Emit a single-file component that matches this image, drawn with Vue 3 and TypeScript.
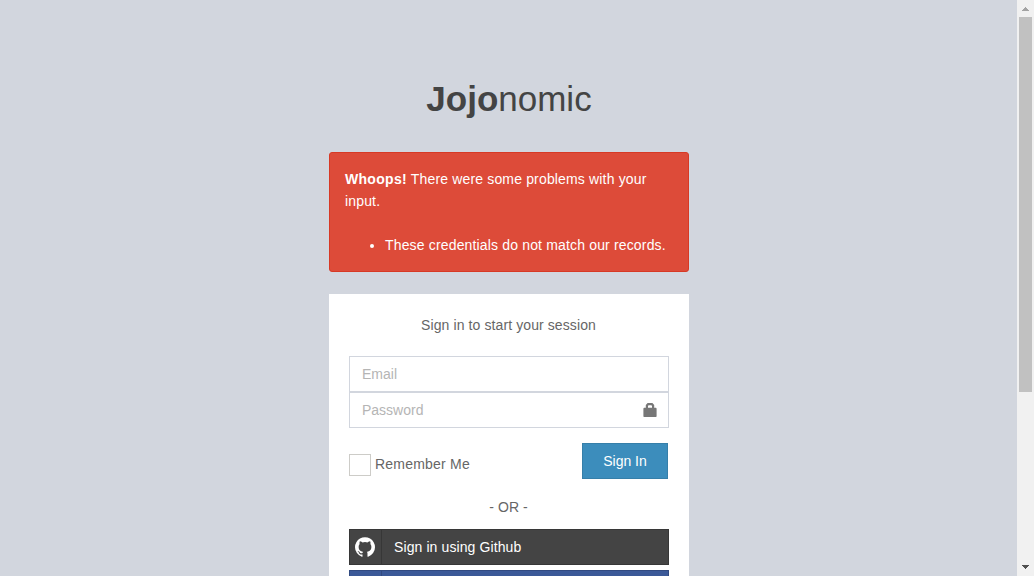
<script setup lang="ts">
import { ref } from 'vue'

const email = ref<string>('')
const password = ref<string>('')
const errors: string[] = ['These credentials do not match our records.']
</script>

<template>
  <div class="window">
    <main class="page">
      <div class="login-box">
        <h1 class="logo"><b>Jojo</b>nomic</h1>
        <div class="alert">
          <strong>Whoops!</strong> <span>There were some problems with your</span><br />
          <span>input.</span>
          <ul>
            <li v-for="error in errors" :key="error">{{ error }}</li>
          </ul>
        </div>
        <form class="panel" @submit.prevent>
          <p class="intro">Sign in to start your session</p>
          <div class="field">
            <input v-model="email" type="text" placeholder="Email" />
          </div>
          <div class="field">
            <input v-model="password" type="password" placeholder="Password" />
            <svg class="lock" viewBox="0 0 14 14">
              <path d="M1 4.8H2.8V2L4.6 0H9.4L11.2 2V4.8H13L13.6 5.4V13.4L13 14H1L.4 13.4V5.4ZM5 4.8H9V3L8.4 2.2H5.6L5 3Z" fill="#777" fill-rule="evenodd" />
            </svg>
          </div>
          <div class="actions">
            <label class="remember"><span class="box"></span><span class="remember-text">Remember Me</span></label>
            <button class="submit" type="submit">Sign In</button>
          </div>
          <p class="or">- OR -</p>
          <a class="social github">
            <span class="social-icon">
              <svg viewBox="0 128 1536 1500">
                <path fill="#fff" d="M768 128q209 0 385.5 103t279.5 279.5 103 385.5q0 251-146.5 451.5t-378.5 277.5q-27 5-40-7t-13-30q0-3 .5-76.5t.5-134.5q0-97-52-142 57-6 102.5-18t94-39 81-66.5 53-105 20.5-150.5q0-119-79-206 37-91-8-204-28-9-81 11t-92 44l-38 24q-93-26-192-26t-192 26q-16-11-42.5-27t-83.5-38.5-85-13.5q-45 113-8 204-79 87-79 206 0 85 20.5 150t52.5 105 80.5 67 94 39 102.5 18q-39 36-49 103-21 10-45 15t-57 5-65.5-21.5-55.5-62.5q-19-32-48.5-52t-49.5-24l-20-3q-21 0-29 4.5t-5 11.5 9 14 13 12l7 5q22 10 43.5 38t31.5 51l10 23q13 38 44 61.5t67 30 69.5 7 55.5-3.5l23-4q0 38 .5 88.5t.5 54.5q0 18-13 30t-40 7q-232-77-378.5-277.5t-146.5-451.5q0-209 103-385.5t279.5-279.5 385.5-103z" />
              </svg>
            </span>
            <span class="social-text">Sign in using Github</span>
          </a>
          <a class="social facebook"><span class="social-icon"></span></a>
        </form>
      </div>
    </main>
    <aside class="scrollbar">
      <svg class="arrow" viewBox="0 0 17 17" shape-rendering="crispEdges">
        <path d="M8 7h1v1h1v1h1v1h1v1H5v-1h1V9h1V8h1z" fill="#a3a3a3" />
      </svg>
      <div class="thumb"></div>
      <svg class="arrow bottom" viewBox="0 0 17 17" shape-rendering="crispEdges">
        <path d="M5 6h7v1h-1v1h-1v1H9v1H8V9H7V8H6V7H5z" fill="#505050" />
      </svg>
    </aside>
  </div>
</template>

<style>
html,
body {
  overflow: hidden;
  background: #d2d6de;
}
</style>

<style scoped>
* {
  box-sizing: border-box;
}
.window {
  display: flex;
  width: 100%;
  height: 576px;
  overflow: hidden;
  background: #d2d6de;
  color: #666;
  font: 14px/22px 'Liberation Sans', Arial, sans-serif;
}
.page {
  flex: 1;
  height: 576px;
  overflow: hidden;
}
.login-box {
  width: 360px;
  margin: 74px 0 0 329px;
}
.logo {
  margin: 0 0 28px;
  height: 50px;
  color: #444;
  font-size: 35px;
  font-weight: 400;
  line-height: 50px;
  text-align: center;
}
.alert {
  height: 120px;
  margin-bottom: 22px;
  padding: 15px;
  border: 1px solid #d73925;
  border-radius: 3px;
  background: #dd4b39;
  color: #fff;
  letter-spacing: 0.16px;
}
.alert strong {
  letter-spacing: 0.3px;
}
.alert ul {
  margin: 22px 0 0;
  padding-left: 40px;
}
.panel {
  height: 400px;
  padding: 20px;
  background: #fff;
}
.intro {
  margin: 0 1px 20px 0;
  letter-spacing: 0.1px;
  text-align: center;
}
.field {
  position: relative;
  height: 36px;
}
.field input {
  display: block;
  width: 100%;
  height: 36px;
  padding: 0 12px;
  border: 1px solid #d2d6de;
  border-radius: 0;
  outline: none;
  background: #fff;
  color: #555;
  font: inherit;
}
.field input::placeholder {
  color: #b5b5b5;
  opacity: 1;
}
.lock {
  position: absolute;
  top: 11px;
  right: 12px;
  width: 14px;
  height: 14px;
}
.actions {
  display: flex;
  justify-content: space-between;
  margin: 15px 1px 17px 0;
}
.remember {
  display: flex;
  gap: 4px;
  height: 22px;
  margin-top: 11px;
}
.remember-text {
  margin-top: -1px;
  letter-spacing: 0.22px;
}
.box {
  width: 22px;
  height: 22px;
  border: 1px solid #cdccc8;
}
.submit {
  width: 86px;
  height: 36px;
  padding: 0;
  border: 1px solid #367fa9;
  background: #3c8dbc;
  color: #fff;
  font: inherit;
}
.or {
  margin: 0 1px 11px 0;
  letter-spacing: 0.1px;
  text-align: center;
}
.social {
  display: flex;
  height: 36px;
  margin-bottom: 5px;
  border: 1px solid #373737;
  color: #fff;
}
.github {
  background: #444;
}
.facebook {
  border-color: #314a81;
  background: #3b5998;
}
.social-icon {
  display: flex;
  align-items: center;
  width: 32px;
  padding-left: 5px;
  border-right: 1px solid #373737;
}
.facebook .social-icon {
  border-color: #314a81;
}
.social-icon svg {
  width: 20px;
  height: 20px;
}
.social-text {
  padding-left: 12px;
  letter-spacing: 0.1px;
  line-height: 34px;
}
.scrollbar {
  display: flex;
  flex-direction: column;
  width: 17px;
  height: 576px;
  background: #f1f1f1;
}
.arrow {
  flex: none;
  display: block;
  width: 17px;
  height: 17px;
}
.thumb {
  height: 375px;
  margin: 0 2px;
  background: #c1c1c1;
}
.bottom {
  margin-top: auto;
}
</style>
